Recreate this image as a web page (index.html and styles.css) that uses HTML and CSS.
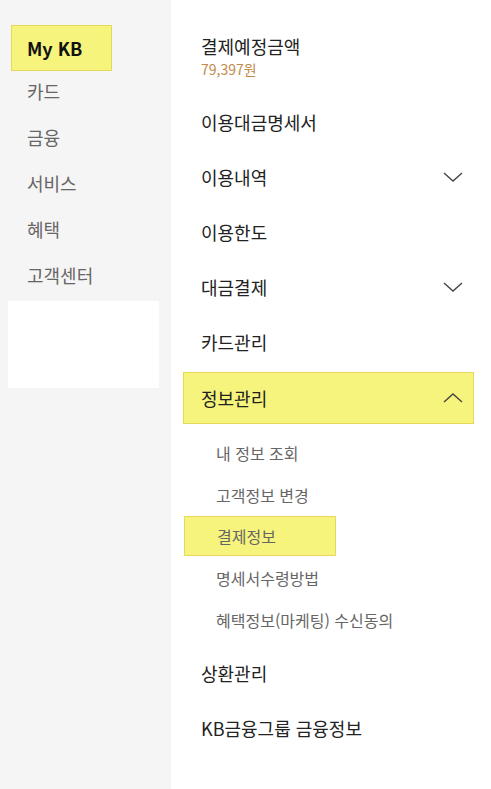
FILE: index.html
```html
<!DOCTYPE html>
<html lang="ko">
<head>
<meta charset="utf-8">
<link rel="stylesheet" href="styles.css">
</head>
<body>
<div class="app">
  <aside class="side">
    <div class="side-active">My KB</div>
    <ul class="side-list">
      <li>카드</li>
      <li>금융</li>
      <li>서비스</li>
      <li>혜택</li>
      <li>고객센터</li>
    </ul>
    <div class="side-blank"></div>
  </aside>
  <main class="main">
    <div class="pay">
      <div class="pay-title">결제예정금액</div>
      <div class="pay-amount">79,397원</div>
    </div>
    <ul class="menu">
      <li class="row">이용대금명세서</li>
      <li class="row"><span>이용내역</span><svg class="chev" viewBox="0 0 20 10"><polyline points="1,1 10,9 19,1"/></svg></li>
      <li class="row">이용한도</li>
      <li class="row"><span>대금결제</span><svg class="chev" viewBox="0 0 20 10"><polyline points="1,1 10,9 19,1"/></svg></li>
      <li class="row">카드관리</li>
      <li class="row row-open"><span>정보관리</span><svg class="chev" viewBox="0 0 20 10"><polyline points="1,9 10,1 19,9"/></svg></li>
    </ul>
    <ul class="sub">
      <li>내 정보 조회</li>
      <li>고객정보 변경</li>
      <li class="sub-active"><span>결제정보</span></li>
      <li>명세서수령방법</li>
      <li>혜택정보(마케팅) 수신동의</li>
    </ul>
    <ul class="menu menu-bottom">
      <li class="row">상환관리</li>
      <li class="row">KB금융그룹 금융정보</li>
    </ul>
  </main>
</div>
</body>
</html>
```
FILE: styles.css
```css
* { box-sizing: border-box; }
html, body { margin: 0; padding: 0; }
body {
  font-family: "Noto Sans CJK KR", "Noto Sans", sans-serif;
  background: #fff;
  width: 491px;
  height: 789px;
  overflow: hidden;
}
ul { list-style: none; margin: 0; padding: 0; }
.app { display: flex; height: 789px; }

.side {
  width: 171px;
  flex: none;
  background: #f5f5f5;
  padding-top: 25px;
}
.side-active {
  margin-left: 11px;
  width: 101px;
  height: 46px;
  background: #f6f47c;
  border: 1px solid #e6d95a;
  padding-left: 15px;
  font-weight: 700;
  font-size: 18px;
  line-height: 44px;
  color: #111;
}
.side-list li {
  height: 46px;
  line-height: 40px;
  padding-left: 27px;
  font-size: 18px;
  color: #666;
}
.side-blank {
  margin: 0 0 0 8px;
  width: 151px;
  height: 87px;
  background: #fff;
}

.main { flex: 1; padding-top: 34px; }
.pay { padding-left: 30px; }
.pay-title { font-size: 18px; line-height: 24px; color: #222; }
.pay-amount { font-size: 14px; line-height: 22px; color: #c28a48; }

.menu { margin-top: 14.5px; }
.row {
  display: flex;
  align-items: center;
  justify-content: space-between;
  height: 55px;
  margin: 0 17px 0 12px;
  padding: 0 11px 0 18px;
  font-size: 18px;
  color: #222;
}
.chev { width: 20px; height: 10px; fill: none; stroke: #444; stroke-width: 1.4; }
.row-open {
  height: 52px;
  margin-top: 2.5px;
  background: #f6f47c;
  border: 1px solid #e6d95a;
  padding-left: 17px;
  padding-right: 10px;
}

.sub { padding-top: 8px; }
.sub li {
  height: 41.75px;
  display: flex;
  align-items: center;
  padding-left: 45px;
  font-size: 16px;
  color: #666;
}
.sub li.sub-active { padding-left: 13px; }
.sub-active span {
  display: flex;
  align-items: center;
  width: 152px;
  height: 40px;
  padding-left: 32px;
  background: #f6f47c;
  border: 1px solid #e6d95a;
}
.menu-bottom { margin-top: 4.5px; }
```
